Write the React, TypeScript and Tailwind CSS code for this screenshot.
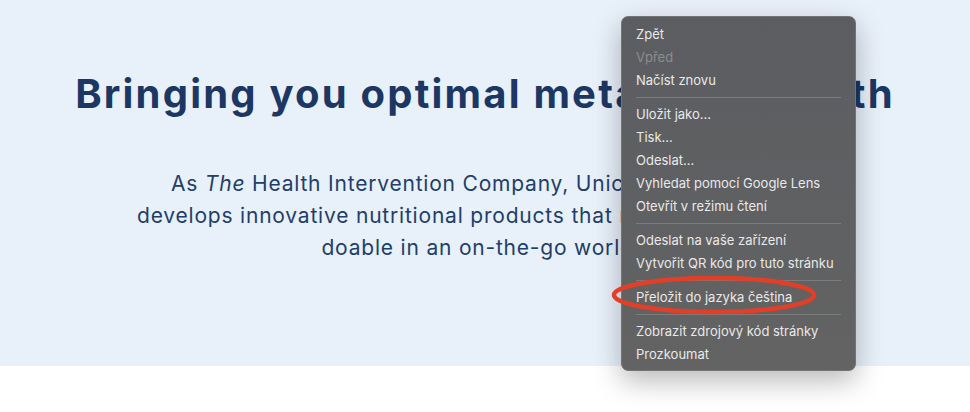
import React from 'react';

type MenuEntry = { label: string; disabled?: boolean } | 'sep';

const menuItems: MenuEntry[] = [
  { label: 'Zpět' },
  { label: 'Vpřed', disabled: true },
  { label: 'Načíst znovu' },
  'sep',
  { label: 'Uložit jako...' },
  { label: 'Tisk...' },
  { label: 'Odeslat...' },
  { label: 'Vyhledat pomocí Google Lens' },
  { label: 'Otevřít v režimu čtení' },
  'sep',
  { label: 'Odeslat na vaše zařízení' },
  { label: 'Vytvořit QR kód pro tuto stránku' },
  'sep',
  { label: 'Přeložit do jazyka čeština' },
  'sep',
  { label: 'Zobrazit zdrojový kód stránky' },
  { label: 'Prozkoumat' }
];

const ContextMenu = () => {
  return (
    <div className="absolute left-[621px] top-[16px] w-[235px] rounded-[7px] border border-[#737476] bg-gradient-to-b from-[#5b5d61] to-[#636363] pt-[6px] pb-[4px] shadow-[0_10px_28px_rgba(0,0,0,0.28)] font-['Inter',sans-serif] text-[13px]">
      {menuItems.map((item, i) =>
        item === 'sep' ? (
          <div key={i} className="h-[11px] flex items-center px-[14px]">
            <div className="h-px w-full bg-[#7a7b7d]"></div>
          </div>
        ) : (
          <div
            key={i}
            className={`h-[23px] leading-[23px] px-[14px] whitespace-nowrap ${item.disabled ? 'text-[#8c8d90]' : 'text-[#e9e9e9]'}`}
          >
            {item.label}
          </div>
        )
      )}
    </div>
  );
};

export default function App() {
  return (
    <div className="relative w-[970px] h-[412px] overflow-hidden bg-white">
      {/* Hero */}
      <section className="h-[366px] bg-[#e8f0fa] flex flex-col items-center pt-[70px] font-['Inter',sans-serif]">
        <h1 className="text-[40px] leading-[48px] font-bold tracking-[2.2px] text-[#1c3763] whitespace-nowrap">
          Bringing you optimal metabolic health
        </h1>
        <p className="mt-[50px] mr-[8px] text-center text-[21px] leading-[32px] tracking-[0.8px] text-[#223e6a]">
          As <em>The</em> Health Intervention Company, Unicity International
          <br />
          develops innovative nutritional products that make healthy living
          <br />
          doable in an on-the-go world.
        </p>
      </section>

      <ContextMenu />

      {/* Red marker ellipse */}
      <svg className="absolute left-0 top-0 pointer-events-none" width="970" height="412" viewBox="0 0 970 412">
        <ellipse cx="714" cy="295" rx="100" ry="17" fill="none" stroke="#e33f28" strokeWidth="4.5" />
      </svg>
    </div>
  );
}
